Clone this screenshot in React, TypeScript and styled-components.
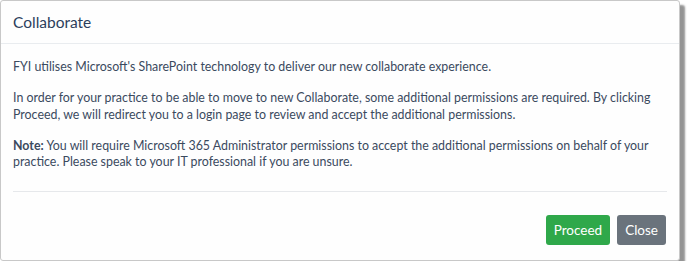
import React from "react";
import styled, { createGlobalStyle } from "styled-components";

const Global = createGlobalStyle`
  html, body { margin: 0; padding: 0; background: #ffffff; }
  body { font-family: "Lato", "Open Sans", sans-serif; }
`;

const Modal = styled.div`
  box-sizing: border-box;
  width: 680px;
  background: #fefefe;
  border: 1px solid #c8c8c8;
  border-radius: 3px;
  box-shadow: 5px 5px 2px rgba(60, 60, 60, 0.55);
  display: flex;
  flex-direction: column;
`;

const Header = styled.div`
  height: 43px;
  box-sizing: border-box;
  padding: 0 12px;
  display: flex;
  align-items: center;
  border-bottom: 1px solid #e9ecef;
`;

const Title = styled.h2`
  margin: 0;
  font-size: 15.5px;
  font-weight: 400;
  color: #2c3e5c;
`;

const Body = styled.div`
  padding: 15px 12px 6px;
  color: #3b4a5e;
  font-size: 12.4px;
  line-height: 16.5px;
`;

const Para = styled.p`
  margin: 0 0 14.5px;
`;

const Divider = styled.hr`
  margin: 0 12px;
  border: 0;
  border-top: 1px solid #e6e8eb;
`;

const Footer = styled.div`
  display: flex;
  justify-content: flex-end;
  gap: 7px;
  padding: 23px 13px 15px;
`;

const Button = styled.button<{ $variant: "success" | "secondary" }>`
  height: 30px;
  padding: 0 8px;
  border: 0;
  border-radius: 3px;
  font-family: "Lato", sans-serif;
  font-size: 13.5px;
  color: #ffffff;
  background: ${(p) => (p.$variant === "success" ? "#2fa84a" : "#6a737c")};
`;

export default function App() {
  return (
    <>
      <Global />
      <Modal>
        <Header>
          <Title>Collaborate</Title>
        </Header>
        <Body>
          <Para>
            FYI utilises Microsoft's SharePoint technology to deliver our new collaborate experience.
          </Para>
          <Para>
            In order for your practice to be able to move to new Collaborate, some additional permissions are required. By clicking Proceed, we will redirect you to a login page to review and accept the additional permissions.
          </Para>
          <Para>
            <strong>Note:</strong> You will require Microsoft 365 Administrator permissions to accept the additional permissions on behalf of your practice. Please speak to your IT professional if you are unsure.
          </Para>
        </Body>
        <Divider />
        <Footer>
          <Button $variant="success">Proceed</Button>
          <Button $variant="secondary">Close</Button>
        </Footer>
      </Modal>
    </>
  );
}
